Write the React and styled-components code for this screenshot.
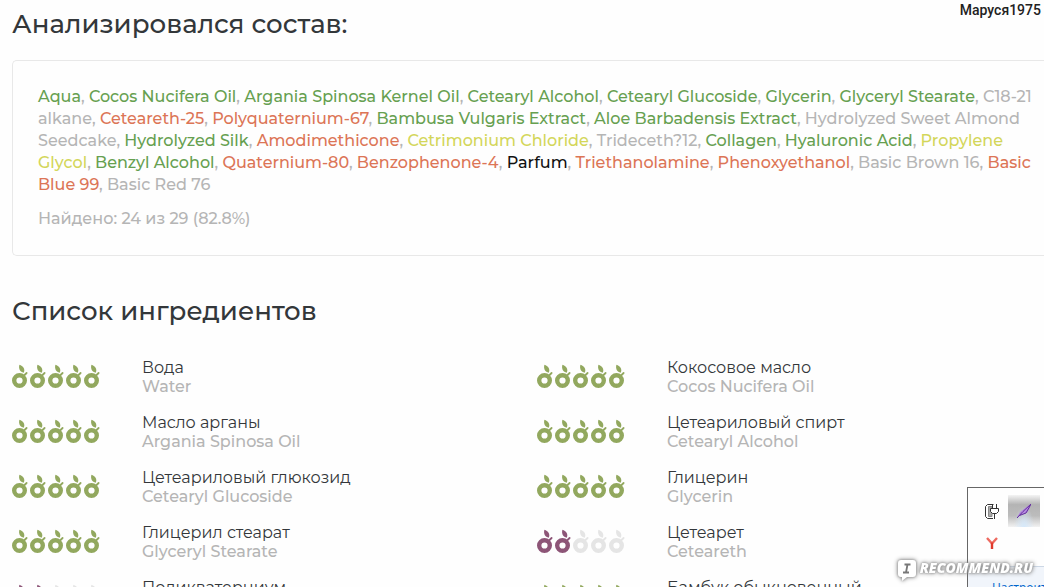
import React from "react";
import styled, { createGlobalStyle } from "styled-components";

const GlobalStyle = createGlobalStyle`
  * {
    box-sizing: border-box;
  }
  body {
    margin: 0;
    background-color: #fefefe;
    font-family: Montserrat, Inter, "Open Sans", sans-serif;
    font-size: 16px;
    color: #33373a;
  }
`;

const Page = styled.main`
  position: relative;
  height: 100vh;
  padding: 8px 0 0 12px;
  overflow: hidden;
`;

const UserName = styled.span`
  position: absolute;
  top: 1px;
  right: 3px;
  font: 500 14px/18px Roboto, sans-serif;
  color: #222;
`;

const Title = styled.h2`
  margin: 0;
  font-size: 26px;
  font-weight: 500;
  line-height: 32px;
`;

const Card = styled.section`
  margin: 20px 0 39px;
  padding: 25px 0 25px 25px;
  border: 1px solid #e8e8e8;
  border-right: 0;
  border-radius: 5px 0 0 5px;
  font-weight: 500;
  color: #b5b5b5;
`;

const Composition = styled.p`
  margin: 0;
  line-height: 22px;
  white-space: nowrap;
`;

const Found = styled.p`
  margin: 12px 0 0;
  line-height: 22px;
`;

const colors = {
  good: "#66a050",
  bad: "#dc7556",
  medium: "#d3d65a",
  plain: "#111",
  none: "#b5b5b5",
};

const Ingredient = styled.span`
  color: ${props => colors[props.$kind]};
`;

const List = styled.ul`
  display: grid;
  grid-template-columns: 525px 1fr;
  row-gap: 17px;
  margin: 31px 0 0;
  padding: 0;
  list-style: none;
`;

const Item = styled.li`
  display: flex;
`;

const Rating = styled.svg`
  flex: none;
  width: 90px;
  height: 26px;
  margin: 6px 40px 0 0;
`;

const Name = styled.div`
  line-height: 19px;
  white-space: nowrap;
`;

const Latin = styled.div`
  font-weight: 500;
  line-height: 19px;
  color: #b5b5b5;
`;

const lines = [
  [
    ["Aqua", "good"],
    ["Cocos Nucifera Oil", "good"],
    ["Argania Spinosa Kernel Oil", "good"],
    ["Cetearyl Alcohol", "good"],
    ["Cetearyl Glucoside", "good"],
    ["Glycerin", "good"],
    ["Glyceryl Stearate", "good"],
    ["C18-21", "none", " "],
  ],
  [
    ["alkane", "none"],
    ["Ceteareth-25", "bad"],
    ["Polyquaternium-67", "bad"],
    ["Bambusa Vulgaris Extract", "good"],
    ["Aloe Barbadensis Extract", "good"],
    ["Hydrolyzed Sweet Almond", "none", " "],
  ],
  [
    ["Seedcake", "none"],
    ["Hydrolyzed Silk", "good"],
    ["Amodimethicone", "bad"],
    ["Cetrimonium Chloride", "medium"],
    ["Trideceth?12", "none"],
    ["Collagen", "good"],
    ["Hyaluronic Acid", "good"],
    ["Propylene", "medium", " "],
  ],
  [
    ["Glycol", "medium"],
    ["Benzyl Alcohol", "good"],
    ["Quaternium-80", "bad"],
    ["Benzophenone-4", "bad"],
    ["Parfum", "plain"],
    ["Triethanolamine", "bad"],
    ["Phenoxyethanol", "bad"],
    ["Basic Brown 16", "none"],
    ["Basic", "bad", " "],
  ],
  [
    ["Blue 99", "bad"],
    ["Basic Red 76", "none", ""],
  ],
];

const items = [
  { name: "Вода", latin: "Water", score: 5 },
  { name: "Кокосовое масло", latin: "Cocos Nucifera Oil", score: 5 },
  { name: "Масло арганы", latin: "Argania Spinosa Oil", score: 5 },
  { name: "Цетеариловый спирт", latin: "Cetearyl Alcohol", score: 5 },
  { name: "Цетеариловый глюкозид", latin: "Cetearyl Glucoside", score: 5 },
  { name: "Глицерин", latin: "Glycerin", score: 5 },
  { name: "Глицерил стеарат", latin: "Glyceryl Stearate", score: 5 },
  { name: "Цетеарет", latin: "Ceteareth", score: 2 },
  { name: "Поликватерниум", latin: "Polyquaternium", score: 2 },
  { name: "Бамбук обыкновенный", latin: "Bambusa Vulgaris", score: 5 },
];

const Fruits = ({ score }) => (
  <Rating viewBox="0 0 90 26" role="img" aria-label={`${score} / 5`}>
    {[0, 1, 2, 3, 4].map(i => {
      const color = i >= score ? "#e5e5e5" : score > 2 ? "#92a85e" : "#8d5577";
      return (
        <g key={i} transform={`translate(${i * 18} 0)`}>
          <circle cx="7.5" cy="16.5" r="5.3" fill="none" stroke={color} strokeWidth="4.4" />
          <path d="M11 12.5L14.6 9" stroke={color} strokeWidth="1.8" strokeLinecap="round" />
          <path d="M7.4 0.8C11 2 13.4 5 11.8 8.8C8 8 6.3 4.8 7.4 0.8Z" fill={color} />
        </g>
      );
    })}
  </Rating>
);

// tray popup in the corner of the screen
const Tray = styled.aside`
  position: fixed;
  right: 0;
  bottom: 0;
  width: 77px;
  height: 100px;
  border: solid #666;
  border-width: 1px 0 0 1px;
  background-color: #fefefe;
  overflow: hidden;
`;

const TrayIcons = styled.div`
  display: grid;
  grid-template-columns: 32px 32px;
  grid-auto-rows: 32px;
  height: 78px;
  padding: 7px 0 0 8px;
`;

const TrayButton = styled.button`
  display: flex;
  align-items: center;
  justify-content: center;
  padding: 0;
  border: 0;
  background: ${props =>
    props.$active
      ? "radial-gradient(ellipse at 50% 100%, #d5e8fa 0, rgba(213, 232, 250, 0) 45%), linear-gradient(#f4f4f4, #b4b4b4 30%, #bcbcbc 65%, #f2f2f2)"
      : "none"};
`;

const TrayFooter = styled.div`
  height: 22px;
  padding: 13px 0 0 24px;
  border-top: 1px solid #ccd7e5;
  background-color: #f1f5fb;
  font: 12px/15px "Open Sans", sans-serif;
  white-space: nowrap;
`;

const TrayLink = styled.a`
  color: #0066cc;
  text-decoration: none;
`;

const Watermark = styled.div`
  position: fixed;
  right: 11px;
  bottom: 9px;
  display: flex;
  align-items: center;
  gap: 3px;
  font: italic 800 14px/20px "Open Sans", sans-serif;
  color: #fff;
  filter: drop-shadow(0 0 1px #999) drop-shadow(0 0 2px #888);
`;

const Bubble = styled.svg`
  width: 20px;
  height: 23px;
  margin-bottom: -4px;
`;

const App = () => (
  <Page>
    <GlobalStyle />
    <UserName>Маруся1975</UserName>
    <Title>Анализировался состав:</Title>
    <Card>
      <Composition>
        {lines.map((line, idx) => (
          <React.Fragment key={idx}>
            {line.map(([name, kind, end = ", "]) => (
              <React.Fragment key={name}>
                <Ingredient $kind={kind}>{name}</Ingredient>
                {end}
              </React.Fragment>
            ))}
            {idx < lines.length - 1 && <br />}
          </React.Fragment>
        ))}
      </Composition>
      <Found>Найдено: 24 из 29 (82.8%)</Found>
    </Card>
    <Title>Список ингредиентов</Title>
    <List>
      {items.map(item => (
        <Item key={item.name}>
          <Fruits score={item.score} />
          <Name>
            {item.name}
            <Latin>{item.latin}</Latin>
          </Name>
        </Item>
      ))}
    </List>
    <Tray>
      <TrayIcons>
        <TrayButton aria-label="Питание">
          <svg width="16" height="17" viewBox="0 0 16 17" fill="none" stroke="#333">
            <path d="M9.5 1.5H3.5L1.5 3.5V13.5L3.5 15.5H9" />
            <path d="M4.5 3.5H8V13.5H4.5Z" fill="#aaa" stroke="#888" />
            <path d="M8.5 1V5M12.5 1V5M6.5 5.5H14.5V8.5L12.5 10.5H8.5L6.5 8.5ZM10.5 11V16" fill="#fff" />
          </svg>
        </TrayButton>
        <TrayButton $active aria-label="Перо">
          <svg width="18" height="18" viewBox="0 0 18 18">
            <path d="M2 15.5L5 10L15.5 2L15 6L12 10.5L6 13Z" fill="#b58ae0" />
            <path d="M2 16L8 9.5L16 2M4.5 13.5L11 11L15.5 3" fill="none" stroke="#63309c" />
          </svg>
        </TrayButton>
        <TrayButton aria-label="Яндекс">
          <svg width="12" height="12" viewBox="0 0 12 12" fill="none" strokeWidth="2.4">
            <path d="M1 1L6 6.5L11 1" stroke="#ee6a60" />
            <path d="M6 5.5V12" stroke="#e03a2c" />
          </svg>
        </TrayButton>
      </TrayIcons>
      <TrayFooter>
        <TrayLink href="/">Настроить...</TrayLink>
      </TrayFooter>
    </Tray>
    <Watermark>
      <Bubble viewBox="0 0 20 23">
        <path d="M4 1H16Q19 1 19 4V15Q19 18 16 18H10L5 22V18H4Q1 18 1 15V4Q1 1 4 1Z" fill="#fff" />
        <path d="M7.5 5.5H13.5M6 13.5H12M10.5 5.5L9 13.5" stroke="#777" strokeWidth="1.8" />
      </Bubble>
      RECOMMEND.RU
    </Watermark>
  </Page>
);

export default App;
